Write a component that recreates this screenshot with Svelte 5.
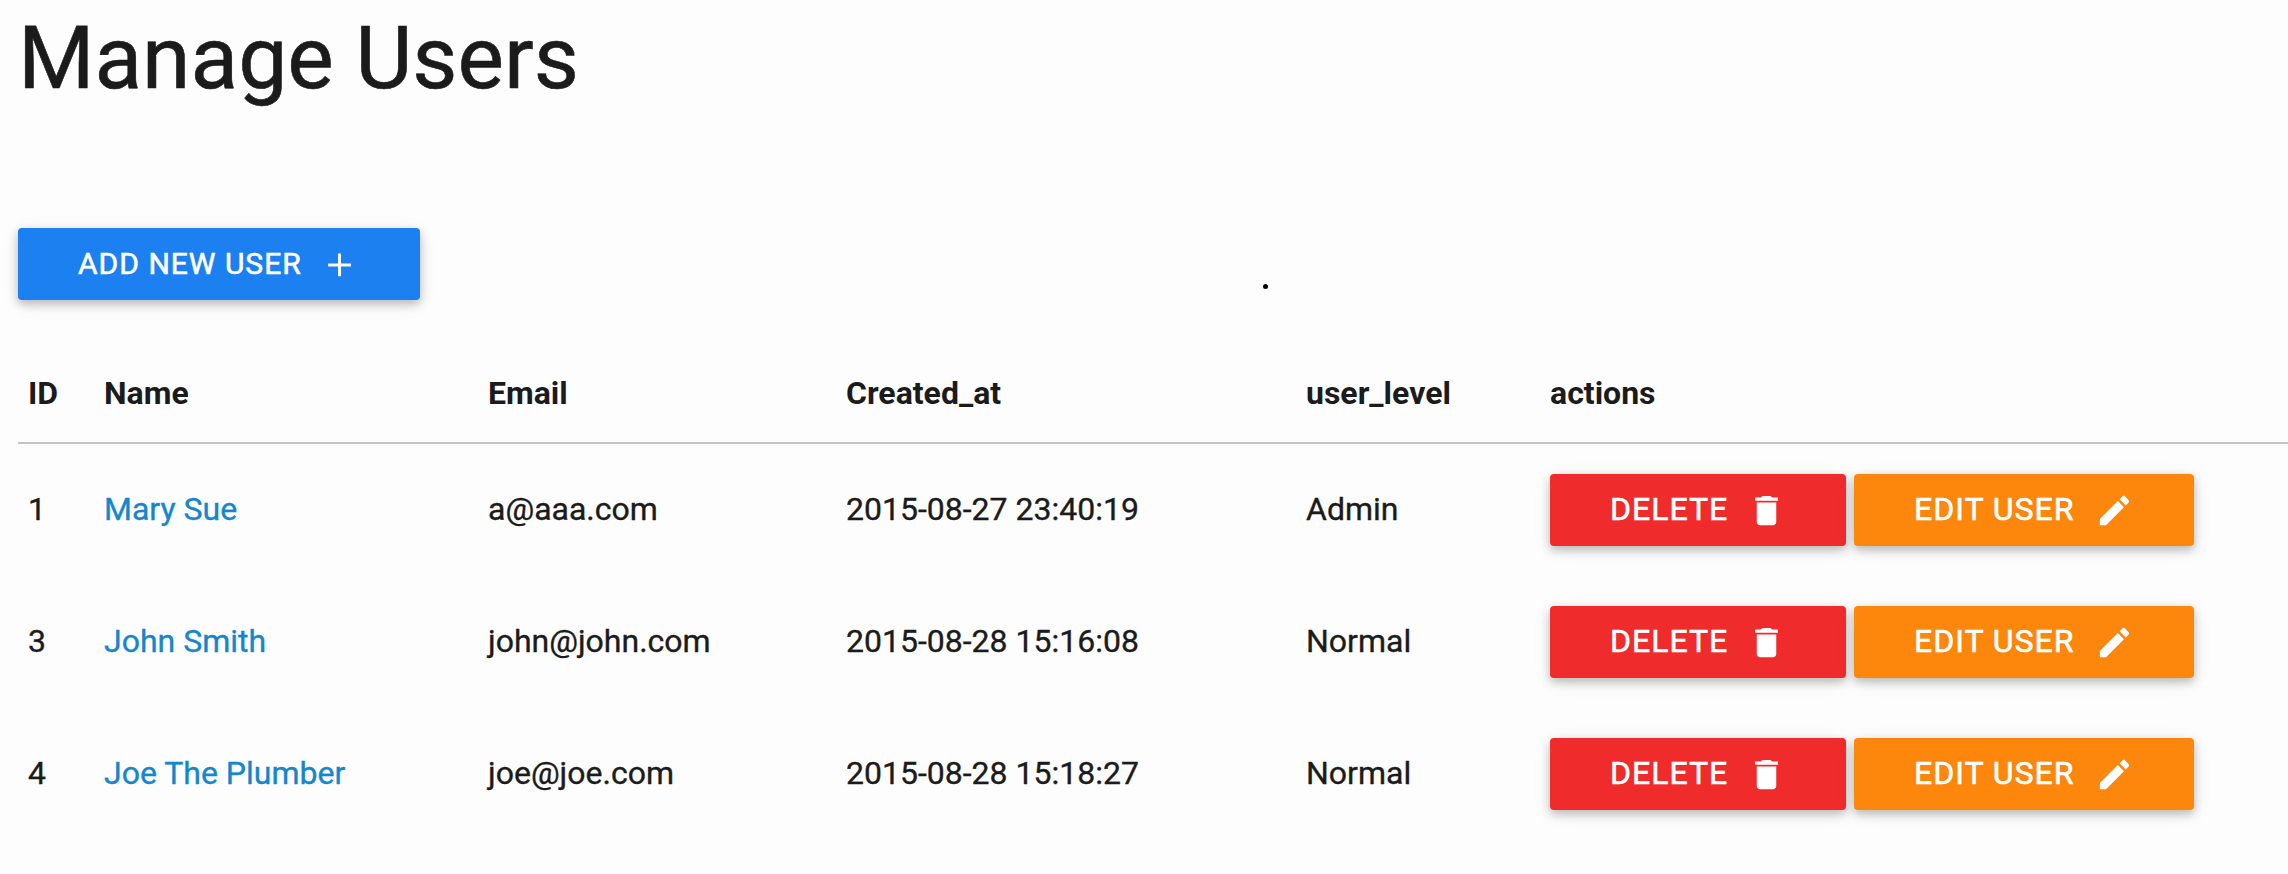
<script>
  const columns = ['ID', 'Name', 'Email', 'Created_at', 'user_level', 'actions'];
  const users = [
    { id: 1, name: 'Mary Sue', email: 'a@aaa.com', created: '2015-08-27 23:40:19', level: 'Admin' },
    { id: 3, name: 'John Smith', email: 'john@john.com', created: '2015-08-28 15:16:08', level: 'Normal' },
    { id: 4, name: 'Joe The Plumber', email: 'joe@joe.com', created: '2015-08-28 15:18:27', level: 'Normal' }
  ];
  const icons = {
    add: 'M18.4 13.2h-6.1v6.1h-1.8v-6.1H4.4v-1.8h6.1V5.3h1.8v6.1h6.1z',
    trash: 'M6 19c0 1.1.9 2 2 2h8c1.1 0 2-.9 2-2V7H6v12zM19 4h-3.5l-1-1h-5l-1 1H5v2h14V4z',
    edit: 'M3 17.25V21h3.75L17.81 9.94l-3.75-3.75L3 17.25zM20.71 7.04c.39-.39.39-1.02 0-1.41l-2.34-2.34c-.39-.39-1.02-.39-1.41 0l-1.83 1.83 3.75 3.75 1.83-1.83z'
  };
</script>

{#snippet button(kind, label, icon)}
  <button class="btn {kind}">
    <span>{label}</span>
    <svg viewBox="0 0 24 24" aria-hidden="true"><path d={icons[icon]} /></svg>
  </button>
{/snippet}

<main>
  <h3>Manage Users</h3>
  <div class="toolbar">
    {@render button('add', 'ADD NEW USER', 'add')}
    <i class="dot"></i>
  </div>
  <div class="table">
    <div class="row head">
      {#each columns as column}<div class="cell">{column}</div>{/each}
    </div>
    {#each users as user (user.id)}
      <div class="row">
        <div class="cell">{user.id}</div>
        <div class="cell"><a href="#user">{user.name}</a></div>
        <div class="cell">{user.email}</div>
        <div class="cell">{user.created}</div>
        <div class="cell">{user.level}</div>
        <div class="cell actions">
          {@render button('delete', 'DELETE', 'trash')}
          {@render button('edit', 'EDIT USER', 'edit')}
        </div>
      </div>
    {/each}
  </div>
</main>

<style>
  :global(body) {
    background: #fdfdfd;
    overflow: hidden;
  }
  main {
    box-sizing: border-box;
    height: 874px;
    padding-left: 18px;
    overflow: hidden;
    color: #1b1b1b;
    font: 400 32px/48px Roboto, sans-serif;
    -webkit-text-stroke: 0.35px currentColor;
  }
  h3 {
    margin: 0;
    height: 228px;
    font-size: 87.6px;
    font-weight: 400;
    line-height: 117px;
    -webkit-text-stroke-width: 0.6px;
  }
  .toolbar {
    display: flex;
    align-items: center;
    height: 72px;
    margin-bottom: 42px;
  }
  .dot {
    width: 5px;
    height: 5px;
    margin: 45px 0 0 843px;
    border-radius: 50%;
    background: #000;
  }
  .btn {
    display: flex;
    align-items: center;
    flex: none;
    box-sizing: border-box;
    height: 72px;
    padding: 0 60px;
    border: 0;
    border-radius: 4px;
    color: #fff;
    font: 400 32px/70px Roboto, sans-serif;
    letter-spacing: 1px;
    white-space: nowrap;
    justify-content: space-between;
    -webkit-text-stroke: 0.6px #fff;
    box-shadow: 0 4px 10px rgba(0, 0, 0, 0.24), 0 4px 20px rgba(0, 0, 0, 0.07);
  }
  .btn span {
    height: 72px;
  }
  .btn svg {
    width: 39px;
    height: 39px;
    fill: #fff;
  }
  .add {
    width: 402px;
    background: #1c80f1;
    font-size: 30px;
    line-height: 72px;
  }
  .delete {
    width: 296px;
    background: #f02b2c;
  }
  .edit {
    width: 340px;
    background: #fd870d;
  }
  .row {
    display: grid;
    grid-template-columns: 76px 384px 358px 460px 244px 1fr;
    align-items: center;
    height: 132px;
  }
  .cell {
    padding: 0 10px 2px;
    white-space: nowrap;
  }
  .head {
    box-sizing: border-box;
    height: 102px;
    border-bottom: 2px solid #c4c4c4;
    font-weight: 700;
    -webkit-text-stroke-width: 0;
  }
  .head .cell {
    padding: 2px 10px 0;
  }
  .actions {
    display: flex;
    gap: 8px;
    padding-bottom: 0;
  }
  a {
    color: #1686cc;
    text-decoration: none;
  }
</style>
